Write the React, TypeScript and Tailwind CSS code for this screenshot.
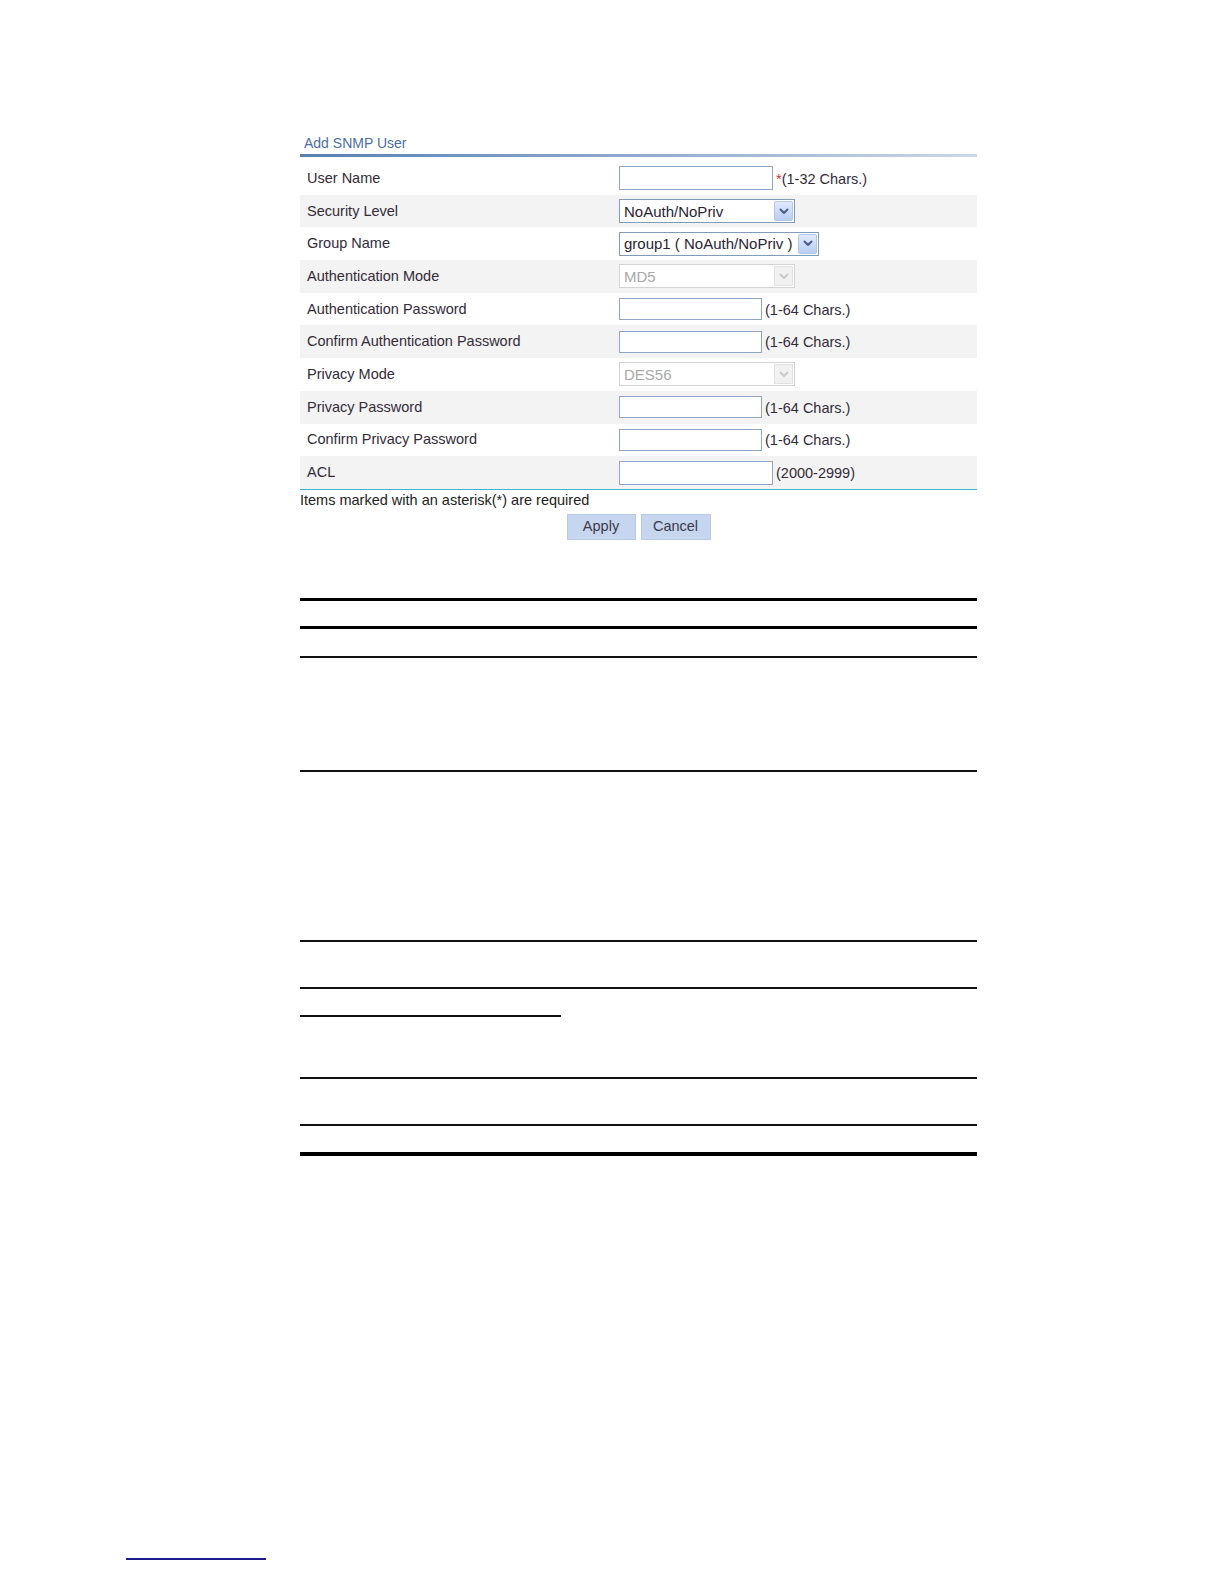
// Add SNMP User form, as shown in a device manual page, followed by the
// empty parameter-table rules below it.

type Field =
  | { kind: 'input'; label: string; width: number; height: number; hint: string; required?: boolean }
  | { kind: 'select'; label: string; width: number; value: string; disabled?: boolean };

const fields: Field[] = [
  { kind: 'input', label: 'User Name', width: 154, height: 24, hint: '(1-32 Chars.)', required: true },
  { kind: 'select', label: 'Security Level', width: 176, value: 'NoAuth/NoPriv' },
  { kind: 'select', label: 'Group Name', width: 200, value: 'group1 ( NoAuth/NoPriv )' },
  { kind: 'select', label: 'Authentication Mode', width: 176, value: 'MD5', disabled: true },
  { kind: 'input', label: 'Authentication Password', width: 143, height: 22, hint: '(1-64 Chars.)' },
  { kind: 'input', label: 'Confirm Authentication Password', width: 143, height: 22, hint: '(1-64 Chars.)' },
  { kind: 'select', label: 'Privacy Mode', width: 176, value: 'DES56', disabled: true },
  { kind: 'input', label: 'Privacy Password', width: 143, height: 22, hint: '(1-64 Chars.)' },
  { kind: 'input', label: 'Confirm Privacy Password', width: 143, height: 22, hint: '(1-64 Chars.)' },
  { kind: 'input', label: 'ACL', width: 154, height: 24, hint: '(2000-2999)' },
];

function Chevron({ color }: { color: string }) {
  return (
    <svg width="10" height="7" viewBox="0 0 10 7" fill="none">
      <path d="M1.5 1.5 L5 5 L8.5 1.5" stroke={color} strokeWidth="2" strokeLinecap="round" strokeLinejoin="round" />
    </svg>
  );
}

function Select({ width, value, disabled }: { width: number; value: string; disabled?: boolean }) {
  return (
    <div
      className={
        disabled
          ? 'flex h-[24px] items-center justify-between border border-[#d4d4d4] bg-white pl-[4px] pr-[1px] text-[#a8a8a8]'
          : 'flex h-[24px] items-center justify-between border border-[#7f9db9] bg-white pl-[4px] pr-[1px] text-[#2b2433]'
      }
      style={{ width }}
    >
      <span className="text-[15px] leading-none">{value}</span>
      {disabled ? (
        <span className="flex h-[20px] w-[19px] items-center justify-center border border-[#e2e2e2] bg-[#f1f1f1]">
          <Chevron color="#c9c9c9" />
        </span>
      ) : (
        <span className="flex h-[20px] w-[19px] items-center justify-center rounded-[2px] border border-[#b2c6ee] bg-gradient-to-b from-[#e1eafd] to-[#b9cdf3]">
          <Chevron color="#4c5f8a" />
        </span>
      )}
    </div>
  );
}

function Row({ field, shaded }: { field: Field; shaded: boolean }) {
  return (
    <div className={shaded ? 'flex h-[32.7px] items-center bg-[#f3f3f3]' : 'flex h-[32.7px] items-center bg-white'}>
      <div className="mt-[1px] w-[319px] shrink-0 pl-[7px] text-[14.5px] text-[#332b3a]">{field.label}</div>
      {field.kind === 'input' ? (
        <div className="flex items-center">
          <div
            className="border border-[#8fa6c4] bg-white"
            style={{ width: field.width, height: field.height }}
          />
          <span className="mt-[3px] pl-[3px] text-[14.5px] text-[#332b3a]">
            {field.required && <span className="text-[#e0303a]">*</span>}
            {field.hint}
          </span>
        </div>
      ) : (
        <Select width={field.width} value={field.value} disabled={field.disabled} />
      )}
    </div>
  );
}

function Rule({ className }: { className: string }) {
  return <div className={className} />;
}

export default function App() {
  return (
    <div className="bg-white font-['Liberation_Sans',Arial,sans-serif]">
      <div className="pl-[300px] pt-[133px]">
        <div className="w-[677px]">
          <div className="h-[21px] pl-[4px] text-[14px] leading-[21px] text-[#4a6ea6]">Add SNMP User</div>
          <div className="h-[3px] bg-gradient-to-r from-[#5a7fb1] to-[#cbd7e8]" />

          <div className="mt-[5px]">
            {fields.map((f, i) => (
              <Row key={f.label} field={f} shaded={i % 2 === 1} />
            ))}
          </div>
          <div className="h-px bg-[#3cb4d4]" />

          <div className="pt-[1px] text-[14.5px] leading-[18px] text-[#222]">
            Items marked with an asterisk(*) are required
          </div>
          <div className="mt-[5px] flex justify-center gap-[5px]">
            <button className="h-[26px] w-[69px] border border-[#b7c9e6] bg-[#c6d6ef] text-[14.5px] text-[#3a3a4a]">
              Apply
            </button>
            <button className="h-[26px] w-[70px] border border-[#b7c9e6] bg-[#c6d6ef] text-[14.5px] text-[#3a3a4a]">
              Cancel
            </button>
          </div>

          <div className="mt-[58px] flex flex-col">
            <Rule className="h-[3px] bg-black" />
            <Rule className="mt-[25px] h-[3px] bg-black" />
            <Rule className="mt-[27px] h-[2px] bg-[#111]" />
            <Rule className="mt-[112px] h-[2px] bg-[#111]" />
            <Rule className="mt-[168px] h-[2px] bg-[#111]" />
            <Rule className="mt-[45px] h-[2px] bg-[#111]" />
            <Rule className="mt-[26px] h-[2px] w-[261px] bg-[#111]" />
            <Rule className="mt-[60px] h-[2px] bg-[#111]" />
            <Rule className="mt-[45px] h-[2px] bg-[#111]" />
            <Rule className="mt-[26px] h-[4px] bg-black" />
          </div>
        </div>
      </div>

      <div className="pl-[126px] pt-[402px]">
        <div className="h-[2px] w-[140px] bg-[#1c1c8c]" />
      </div>
    </div>
  );
}
